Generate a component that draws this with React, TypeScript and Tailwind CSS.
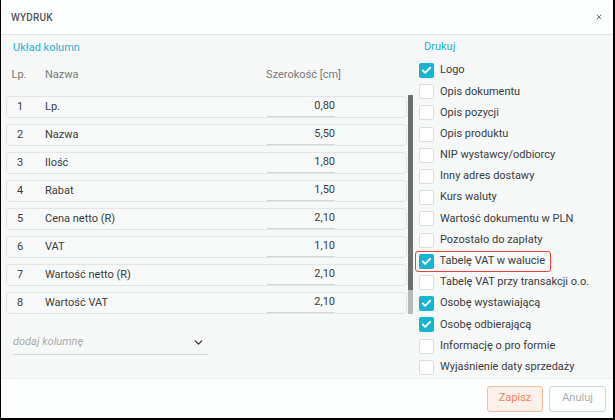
import React from 'react';
import { Check, ChevronDown, X } from 'lucide-react';

const columns = [
  { lp: 1, name: 'Lp.', width: '0,80' },
  { lp: 2, name: 'Nazwa', width: '5,50' },
  { lp: 3, name: 'Ilość', width: '1,80' },
  { lp: 4, name: 'Rabat', width: '1,50' },
  { lp: 5, name: 'Cena netto (R)', width: '2,10' },
  { lp: 6, name: 'VAT', width: '1,10' },
  { lp: 7, name: 'Wartość netto (R)', width: '2,10' },
  { lp: 8, name: 'Wartość VAT', width: '2,10' },
];

const printOptions = [
  { label: 'Logo', checked: true },
  { label: 'Opis dokumentu', checked: false },
  { label: 'Opis pozycji', checked: false },
  { label: 'Opis produktu', checked: false },
  { label: 'NIP wystawcy/odbiorcy', checked: false },
  { label: 'Inny adres dostawy', checked: false },
  { label: 'Kurs waluty', checked: false },
  { label: 'Wartość dokumentu w PLN', checked: false },
  { label: 'Pozostało do zapłaty', checked: false },
  { label: 'Tabelę VAT w walucie', checked: true, highlight: true },
  { label: 'Tabelę VAT przy transakcji o.o.', checked: false },
  { label: 'Osobę wystawiającą', checked: true },
  { label: 'Osobę odbierającą', checked: true },
  { label: 'Informację o pro formie', checked: false },
  { label: 'Wyjaśnienie daty sprzedaży', checked: false },
];

function Checkbox({ checked }: { checked: boolean }) {
  if (checked) {
    return (
      <div className="flex h-[15px] w-[15px] items-center justify-center rounded-[2px] bg-[#17b4d2]">
        <Check className="h-[11px] w-[11px] text-white" strokeWidth={4} />
      </div>
    );
  }
  return <div className="h-[15px] w-[15px] rounded-[2px] border border-[#dcdfdf] bg-white" />;
}

export default function App() {
  return (
    <div
      className="flex h-[420px] w-[615px] flex-col border-l border-r-2 border-b-2 border-black bg-white text-[11px] text-[#3a3d3d]"
      style={{ fontFamily: 'Roboto, "Liberation Sans", sans-serif' }}
    >
      {/* Header */}
      <div className="flex h-[35px] shrink-0 items-center justify-between border-b border-[#e4e6e6] bg-[#fcfdfd] pl-[10px] pr-[10px]">
        <span className="text-[10px] font-medium tracking-[0.2px] text-[#555858]">WYDRUK</span>
        <X className="h-[8px] w-[8px] text-[#777]" strokeWidth={3} />
      </div>

      {/* Body */}
      <div className="flex flex-1 bg-[#f6f7f7] pt-[6px]">
        {/* Columns layout */}
        <div className="w-[412px] shrink-0 pl-[5px]">
          <div className="h-[14px] pl-[7px] leading-[14px] text-[#1fb3cf]">Układ kolumn</div>
          <div className="flex h-[41px] items-center text-[#777a7a]">
            <span className="w-[26px] text-center">Lp.</span>
            <span className="pl-[13px]">Nazwa</span>
            <span className="ml-auto mr-[72px]">Szerokość [cm]</span>
          </div>
          <div className="flex">
            <div className="w-[405px]">
              {columns.map((c) => (
                <div
                  key={c.lp}
                  className="mb-[6px] flex h-[22px] items-center rounded-[4px] border border-[#e4e6e6] bg-[#f7f8f8]"
                >
                  <span className="w-[26px] text-center">{c.lp}</span>
                  <span className="pl-[12px]">{c.name}</span>
                  <span className="ml-auto mr-[71px] flex h-full w-[68px] items-center justify-end border-b border-[#d5d8d8]">
                    {c.width}
                  </span>
                </div>
              ))}
            </div>
            <div className="-mt-[1px] ml-[1px] flex h-[219px] w-[5px] flex-col">
              <div className="h-[195px] bg-[#6c706f]" />
              <div className="flex-1 bg-[#b7baba]" />
            </div>
          </div>
          <div className="ml-[7px] mt-[11px] flex h-[24px] w-[195px] items-center justify-between border-b border-[#d5d8d8] pr-[3px]">
            <span className="italic text-[#a9acac]">dodaj kolumnę</span>
            <ChevronDown className="h-[13px] w-[13px] text-[#333]" strokeWidth={2.5} />
          </div>
        </div>

        {/* Print options */}
        <div className="-mt-[1px] flex-1 pl-[6px]">
          <div className="h-[14px] pl-[5px] leading-[14px] text-[#1fb3cf]">Drukuj</div>
          <div className="mt-[6px]">
            {printOptions.map((o) => (
              <div
                key={o.label}
                className={
                  o.highlight
                    ? '-ml-[4px] flex h-[21.2px] w-[136px] items-center gap-[6px] rounded-[3px] border-[1.5px] border-[#e8423f] pl-[2.5px]'
                    : 'flex h-[21.2px] items-center gap-[6px]'
                }
              >
                <Checkbox checked={o.checked} />
                <span className="text-[#3a3d3d]">{o.label}</span>
              </div>
            ))}
          </div>
        </div>
      </div>

      {/* Footer */}
      <div className="flex h-[40px] shrink-0 items-center justify-end gap-[6px] border-t border-[#eceeee] bg-[#fcfdfd] pr-[7px]">
        <button className="h-[26px] w-[56px] rounded-[3px] border border-[#f6bca4] bg-[#fdefe9] text-[11px] text-[#f0875c]">
          Zapisz
        </button>
        <button className="h-[26px] w-[57px] rounded-[3px] border border-[#d3d7d7] bg-[#fcfdfd] text-[11px] text-[#a8acac]">
          Anuluj
        </button>
      </div>
    </div>
  );
}
